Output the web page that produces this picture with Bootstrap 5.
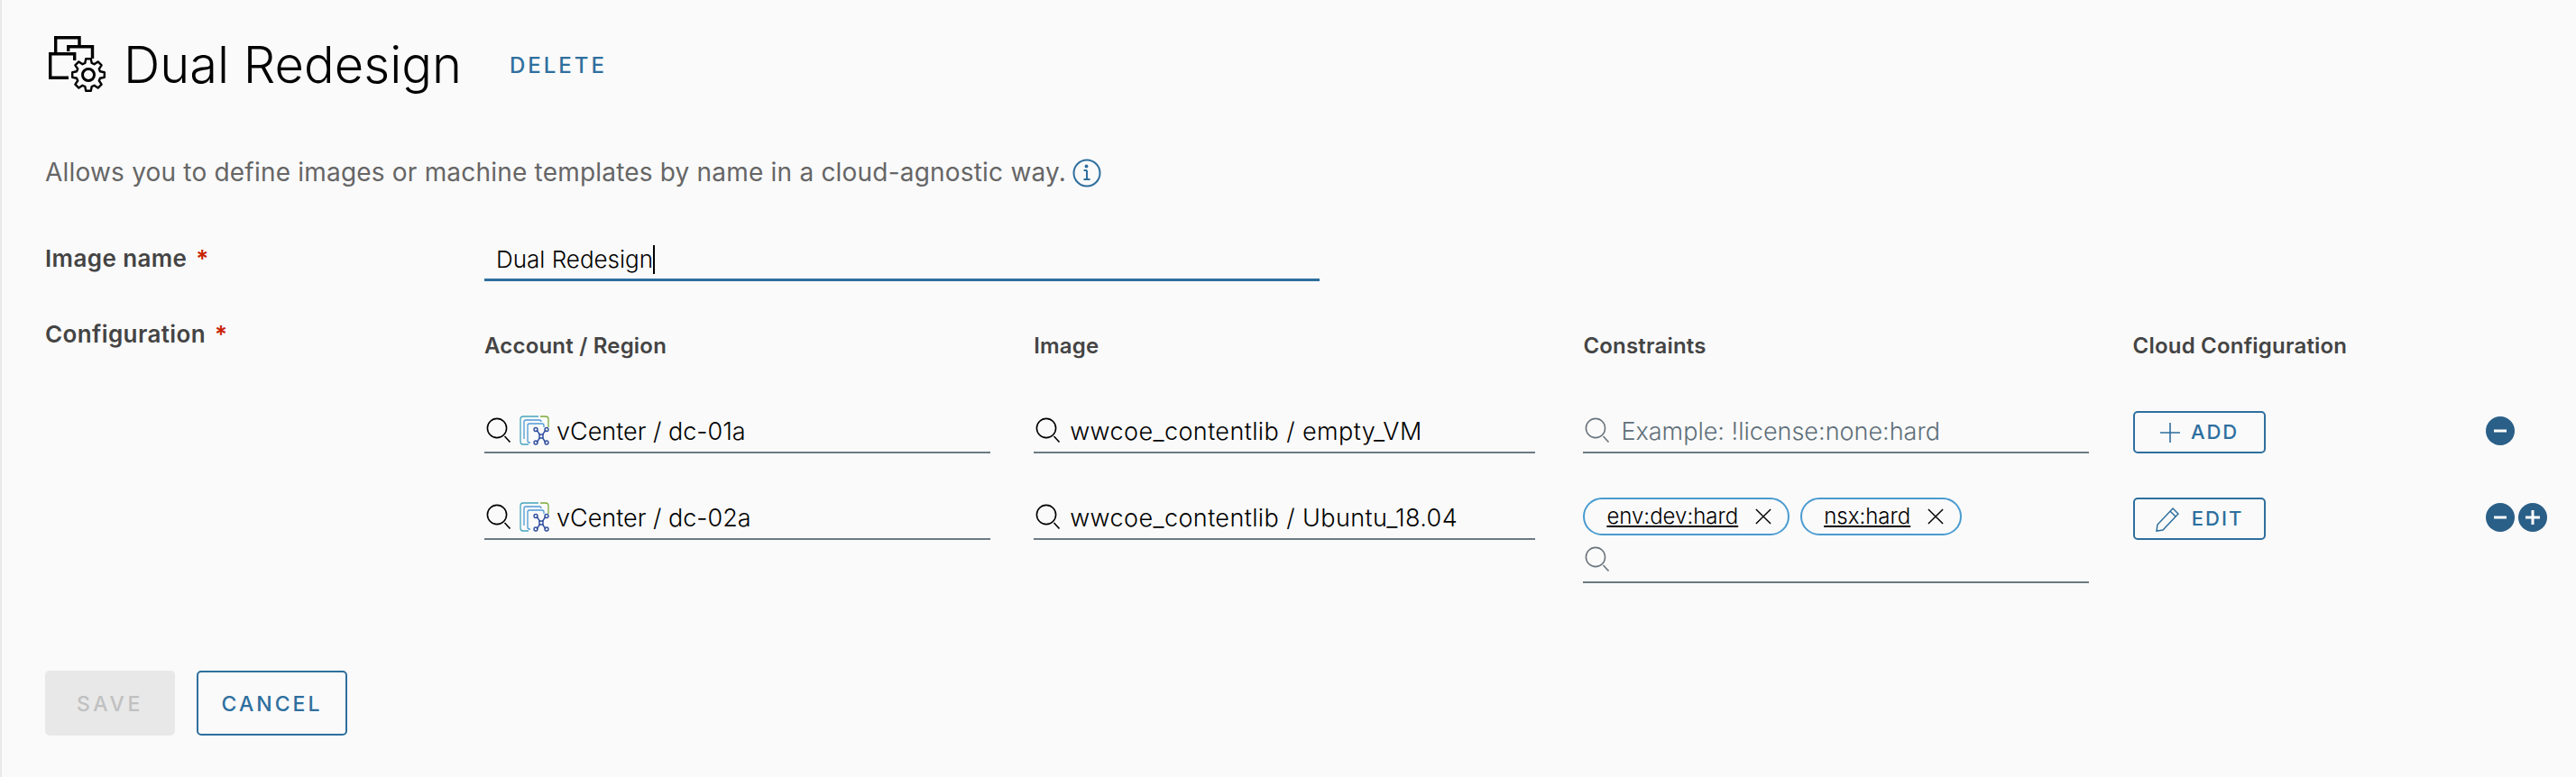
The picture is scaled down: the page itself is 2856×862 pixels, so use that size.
<!DOCTYPE html>
<html lang="en">
<head>
  <meta charset="UTF-8">
  <title>Dual Redesign</title>
  <link href="https://cdn.jsdelivr.net/npm/bootstrap@5.3.2/dist/css/bootstrap.min.css" rel="stylesheet" />
  <style>
    body {
      background: #fafafa;
      font-family: "Inter", "Liberation Sans", sans-serif;
      color: #000;
    }
    .page-wrap {
      min-height: 862px;
      border-left: 2px solid #e8e8e8;
      padding: 40px 0 0 48px;
    }
    .head-row { height: 63px; margin-left: 4px; }
    .head-title {
      font-size: 56px;
      font-weight: 300;
      line-height: 63px;
      margin: 2px 0 0 20px;
    }
    .link-delete {
      color: #2e6f9e;
      font-size: 24px;
      font-weight: 500;
      letter-spacing: 3px;
      text-decoration: none;
      margin: 2px 0 0 53px;
    }
    .desc-text {
      margin: 69px 0 0;
      font-size: 28px;
      letter-spacing: .2px;
      line-height: 38px;
      color: #666;
    }
    .info-ic { margin-left: 7px; vertical-align: -7px; }
    .name-row { margin-top: 52px; height: 50px; }
    .side-label {
      width: 487px;
      flex: none;
      font-size: 26px;
      font-weight: 600;
      letter-spacing: .4px;
      line-height: 50px;
      color: #444;
      margin: 0;
    }
    .side-label span { color: #c92100; margin-left: 10px; }
    .name-field {
      width: 926px;
      height: 50px;
      border-bottom: 3px solid #2e6f9e;
      padding: 2px 0 0 13px;
      font-size: 26px;
      font-weight: 300;
      line-height: 47px;
    }
    .caret-bar { display: inline-block; width: 2px; height: 32px; background: #000; vertical-align: -7px; }
    .config-block { margin-top: 43px; }
    .config-label { line-height: 32px; }
    .cfg-grid {
      display: grid;
      grid-template-columns: 561px 561px 561px 343px auto;
      column-gap: 48.2px;
      align-items: start;
    }
    .col-head { font-size: 24px; font-weight: 600; letter-spacing: .2px; color: #444; line-height: 30px; margin-top: 14px; }
    .row-one { margin-top: 54px; }
    .row-two { margin-top: 46px; }
    .search-field {
      height: 50px;
      border-bottom: 2px solid #6b7a83;
      padding-left: 2px;
    }
    .field-short { width: 556px; }
    .search-field .form-control {
      background: transparent;
      border: 0;
      border-radius: 0;
      padding: 2px 0 0;
      box-shadow: none;
      font-size: 27px;
      font-weight: 300;
      color: #000;
      line-height: 46px;
      height: 48px;
    }
    .search-field .wide-value { letter-spacing: .4px; }
    .search-field .form-control::placeholder { color: #5f6f79; opacity: 1; }
    .search-field svg { flex: none; }
    .field-gap { margin-right: 10px; }
    .field-gap-wide { margin-right: 12px; }
    .icon-gap { margin: 0 8px 0 9px; }
    .chip-line { height: 42px; margin-top: 3px; gap: 12px; }
    .chip-pill {
      height: 42px;
      border: 2px solid #4a9bd0;
      border-radius: 21px;
      padding: 0 18px 0 24px;
      font-size: 24px;
      font-weight: 300;
    }
    .chip-pill u { margin-right: 19px; }
    .chip-search { height: 53px; }
    .btn-small, .btn-big {
      --bs-btn-color: #2e6f9e;
      --bs-btn-border-color: #2e6f9e;
      --bs-btn-border-width: 2px;
      --bs-btn-border-radius: 5px;
      --bs-btn-bg: transparent;
      --bs-btn-padding-x: 0;
      --bs-btn-padding-y: 0;
      font-weight: 500;
    }
    .btn-small { width: 147px; height: 47px; margin-top: 3px; font-size: 22px; letter-spacing: 2px; gap: 11px; }
    .btn-big { height: 72px; padding-top: 3px; font-size: 23px; letter-spacing: 3px; width: 167px; }
    .btn-save {
      --bs-btn-disabled-bg: #e8e8e8;
      --bs-btn-disabled-border-color: #e8e8e8;
      --bs-btn-disabled-color: #c0c0c0;
      --bs-btn-disabled-opacity: 1;
      width: 144px;
      letter-spacing: 3.6px;
    }
    .circle-btn {
      width: 32px;
      height: 32px;
      border-radius: 50%;
      background: #2a5f88;
      margin-top: 9px;
    }
    .foot-row { margin-top: 97px; gap: 24px; }
  </style>
</head>
<body>
<svg width="0" height="0" class="d-none" aria-hidden="true">
  <symbol id="ic-search" viewBox="0 0 28 28">
    <circle cx="12" cy="12" r="10.6" fill="none" stroke="currentColor" stroke-width="1.6"/>
    <path d="M20.5 21l6 6.5" fill="none" stroke="currentColor" stroke-width="1.6"/>
  </symbol>
  <symbol id="ic-vcenter" viewBox="0 0 33 33">
    <path d="M23 1h6a3 3 0 0 1 3 3v9" fill="none" stroke="#7cab3a" stroke-width="1.3"/>
    <path d="M21 1H4a3 3 0 0 0-3 3v25a3 3 0 0 0 3 3h6" fill="none" stroke="#45a5bd" stroke-width="1.3"/>
    <path d="M24 7a2 2 0 0 0-2-2H7a2 2 0 0 0-2 2v19" fill="none" stroke="#4d9ad6" stroke-width="1.3"/>
    <path d="M27 13v-2a2 2 0 0 0-2-2H11a2 2 0 0 0-2 2v17a2 2 0 0 0 2 2h1" fill="none" stroke="#4d9ad6" stroke-width="1.3"/>
    <g fill="none" stroke="#2f4f9e" stroke-width="1.4">
      <path d="M19 16l4 6M29 16l-4 6M19 30l4-6M29 30l-4-6"/>
      <rect x="22" y="21" width="4" height="4"/>
      <circle cx="18" cy="15.5" r="2"/><circle cx="30" cy="15.5" r="2"/>
      <circle cx="18" cy="30" r="2"/><circle cx="30" cy="30" r="2"/>
    </g>
  </symbol>
  <symbol id="ic-close" viewBox="0 0 20 20">
    <path d="M1 1l18 18M19 1L1 19" fill="none" stroke="currentColor" stroke-width="1.6"/>
  </symbol>
</svg>

<div class="page-wrap">
  <div class="head-row d-flex align-items-center">
    <svg width="63" height="63" viewBox="0 0 63 63" fill="none" stroke="#000" stroke-width="3.4">
      <path d="M7.7 18V1.7H34V10"/>
      <path d="M21.7 17V11.7H48.5V25"/>
      <path d="M28.7 27V19.7H1.7V46.3H22"/>
      <g transform="translate(44 43)" stroke-width="2.4" stroke-linejoin="round">
        <path d="M2.8-17.8L3.7-13 6.5-11.8 10.6-14.6 14.6-10.6 11.8-6.5 13-3.7 17.8-2.8 17.8 2.8 13 3.7 11.8 6.5 14.6 10.6 10.6 14.6 6.5 11.8 3.7 13 2.8 17.8-2.8 17.8-3.7 13-6.5 11.8-10.6 14.6-14.6 10.6-11.8 6.5-13 3.7-17.8 2.8-17.8-2.8-13-3.7-11.8-6.5-14.6-10.6-10.6-14.6-6.5-11.8-3.7-13-2.8-17.8Z" fill="#fafafa"/>
        <circle r="6.5" stroke-width="3"/>
      </g>
    </svg>
    <h1 class="head-title">Dual Redesign</h1>
    <a href="#" class="link-delete">DELETE</a>
  </div>

  <p class="desc-text">Allows you to define images or machine templates by name in a cloud-agnostic way.<svg class="info-ic" width="32" height="32" viewBox="0 0 32 32" fill="none" stroke="#2e6f9e" stroke-width="2"><circle cx="16" cy="16" r="14.5"/><path d="M16 13v10M12.5 13H16M12.5 23h7"/><circle cx="15.5" cy="8.5" r="1" fill="#2e6f9e"/></svg></p>

  <div class="name-row d-flex">
    <label class="side-label">Image name<span>*</span></label>
    <div class="name-field">Dual Redesign<span class="caret-bar"></span></div>
  </div>

  <div class="config-block d-flex">
    <label class="side-label config-label">Configuration<span>*</span></label>
    <div>
      <div class="cfg-grid">
        <div class="col-head">Account / Region</div>
        <div class="col-head">Image</div>
        <div class="col-head">Constraints</div>
        <div class="col-head">Cloud Configuration</div>
        <div></div>
      </div>

      <div class="cfg-grid row-one">
        <div class="search-field d-flex align-items-center">
          <svg width="28" height="28"><use href="#ic-search"/></svg>
          <svg width="33" height="33" class="icon-gap"><use href="#ic-vcenter"/></svg>
          <input class="form-control" value="vCenter / dc-01a">
        </div>
        <div class="search-field field-short d-flex align-items-center">
          <svg width="28" height="28" class="field-gap"><use href="#ic-search"/></svg>
          <input class="form-control wide-value" value="wwcoe_contentlib / empty_VM">
        </div>
        <div class="search-field d-flex align-items-center text-secondary">
          <svg width="28" height="28" class="field-gap-wide"><use href="#ic-search"/></svg>
          <input class="form-control" placeholder="Example: !license:none:hard">
        </div>
        <div><button class="btn btn-small d-flex align-items-center justify-content-center">
          <svg width="24" height="24" viewBox="0 0 24 24" fill="none" stroke="currentColor" stroke-width="1.6"><path d="M12 1v22M1 12h22"/></svg>ADD</button></div>
        <div class="d-flex gap-1">
          <div class="circle-btn d-flex align-items-center justify-content-center">
            <svg width="18" height="18" viewBox="0 0 18 18" stroke="#fff" stroke-width="3"><path d="M2 9h14"/></svg>
          </div>
        </div>
      </div>

      <div class="cfg-grid row-two">
        <div class="search-field d-flex align-items-center">
          <svg width="28" height="28"><use href="#ic-search"/></svg>
          <svg width="33" height="33" class="icon-gap"><use href="#ic-vcenter"/></svg>
          <input class="form-control" value="vCenter / dc-02a">
        </div>
        <div class="search-field field-short d-flex align-items-center">
          <svg width="28" height="28" class="field-gap"><use href="#ic-search"/></svg>
          <input class="form-control wide-value" value="wwcoe_contentlib / Ubuntu_18.04">
        </div>
        <div>
          <div class="chip-line d-flex">
            <span class="chip-pill d-inline-flex align-items-center"><u>env:dev:hard</u><svg width="18" height="18"><use href="#ic-close"/></svg></span>
            <span class="chip-pill d-inline-flex align-items-center"><u>nsx:hard</u><svg width="18" height="18"><use href="#ic-close"/></svg></span>
          </div>
          <div class="search-field chip-search d-flex align-items-center text-secondary">
            <svg width="28" height="28"><use href="#ic-search"/></svg>
          </div>
        </div>
        <div><button class="btn btn-small d-flex align-items-center justify-content-center">
          <svg width="30" height="30" viewBox="0 0 30 30" fill="none" stroke="currentColor" stroke-width="1.5"><path d="M2 28l1-7L20 3l6 6L9 27zM17 6l6 6"/></svg>EDIT</button></div>
        <div class="d-flex gap-1">
          <div class="circle-btn d-flex align-items-center justify-content-center">
            <svg width="18" height="18" viewBox="0 0 18 18" stroke="#fff" stroke-width="3"><path d="M2 9h14"/></svg>
          </div>
          <div class="circle-btn d-flex align-items-center justify-content-center">
            <svg width="20" height="20" viewBox="0 0 20 20" stroke="#fff" stroke-width="3"><path d="M2 10h16M10 2v16"/></svg>
          </div>
        </div>
      </div>
    </div>
  </div>

  <div class="foot-row d-flex">
    <button class="btn btn-big btn-save" disabled>SAVE</button>
    <button class="btn btn-big">CANCEL</button>
  </div>
</div>
<script src="https://cdn.jsdelivr.net/npm/bootstrap@5.3.2/dist/js/bootstrap.bundle.min.js"></script>
</body>
</html>
